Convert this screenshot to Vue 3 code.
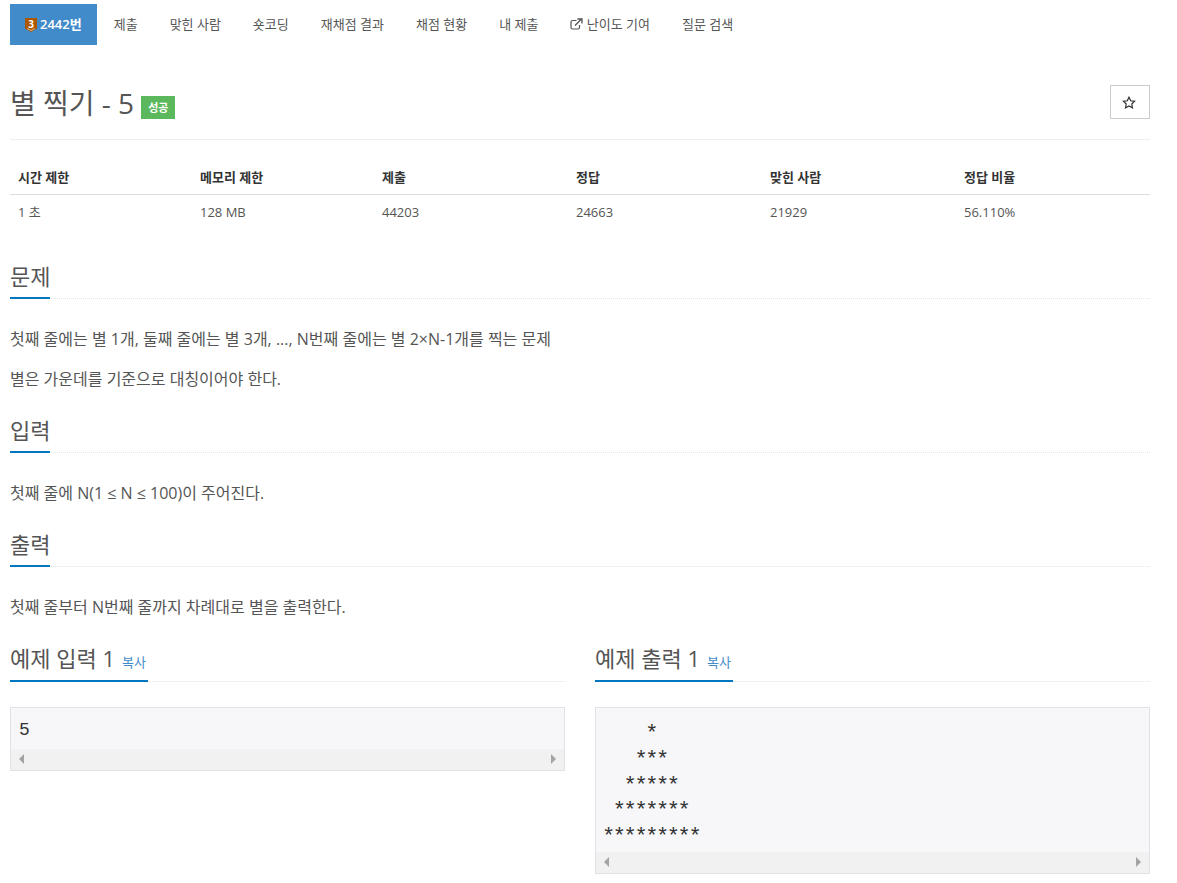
<script setup>
const navItems = ['제출', '맞힌 사람', '숏코딩', '재채점 결과', '채점 현황', '내 제출']
const heads = ['시간 제한', '메모리 제한', '제출', '정답', '맞힌 사람', '정답 비율']
const vals = ['1 초', '128 MB', '44203', '24663', '21929', '56.110%']
const stars = '    *\n   ***\n  *****\n *******\n*********'
</script>

<template>
  <div class="page">
    <ul class="nav">
      <li class="item active">
        <a>
          <span class="tier">
            <svg width="12" height="14" viewBox="0 0 12 14"><path d="M0 0H12V10.5L6 14L0 10.5Z" fill="#ad5600"/><path d="M2 10.5L6 12.5L10 10.5" fill="none" stroke="#e8c9a8" stroke-width="0.8"/></svg>
            <span class="tier-num">3</span>
          </span>2442번
        </a>
      </li>
      <li v-for="n in navItems" :key="n" class="item"><a>{{ n }}</a></li>
      <li class="item">
        <a>
          <svg class="ext" width="13" height="12" viewBox="0 0 13 12"><path d="M9.5 7V9.5A1.5 1.5 0 0 1 8 11H2.5A1.5 1.5 0 0 1 1 9.5V4A1.5 1.5 0 0 1 2.5 2.5H6.5" fill="none" stroke="#555" stroke-width="1.2"/><path d="M5 7.5L11 1.5M7.5 1H12V5.5" fill="none" stroke="#555" stroke-width="1.3"/></svg>
          난이도 기여
        </a>
      </li>
      <li class="item"><a>질문 검색</a></li>
    </ul>

    <div class="title-row">
      <h1 class="title">별 찍기 - 5<span class="label">성공</span></h1>
      <button class="star-btn">
        <svg width="14" height="13" viewBox="0 0 14 13"><path d="M7 1.2L8.7 4.8L12.6 5.3L9.8 8L10.5 11.9L7 10L3.5 11.9L4.2 8L1.4 5.3L5.3 4.8Z" fill="none" stroke="#333" stroke-width="1.2" stroke-linejoin="miter"/></svg>
      </button>
    </div>

    <table class="info">
      <thead><tr><th v-for="h in heads" :key="h">{{ h }}</th></tr></thead>
      <tbody><tr><td v-for="v in vals" :key="v">{{ v }}</td></tr></tbody>
    </table>

    <section class="sec first">
      <div class="headline"><h2>문제</h2></div>
      <p>첫째 줄에는 별 1개, 둘째 줄에는 별 3개, ..., N번째 줄에는 별 2×N-1개를 찍는 문제</p>
      <p>별은 가운데를 기준으로 대칭이어야 한다.</p>
    </section>
    <section class="sec">
      <div class="headline"><h2>입력</h2></div>
      <p>첫째 줄에 N(1 ≤ N ≤ 100)이 주어진다.</p>
    </section>
    <section class="sec">
      <div class="headline"><h2>출력</h2></div>
      <p>첫째 줄부터 N번째 줄까지 차례대로 별을 출력한다.</p>
    </section>

    <div class="samples">
      <div class="sample">
        <div class="headline"><h2>예제 입력 1<a class="copy">복사</a></h2></div>
        <div class="pre">
          <pre>5</pre>
          <div class="bar"><i class="al"></i><i class="ar"></i></div>
        </div>
      </div>
      <div class="sample">
        <div class="headline"><h2>예제 출력 1<a class="copy">복사</a></h2></div>
        <div class="pre">
          <pre class="stars">{{ stars }}</pre>
          <div class="bar"><i class="al"></i><i class="ar"></i></div>
        </div>
      </div>
    </div>
  </div>
</template>

<style>
html, body { background: #fff; }
</style>

<style scoped>
.page {
  width: 1140px;
  padding: 4px 0 9px;
  margin-left: 10px;
  font-family: "Open Sans", "Noto Sans CJK KR", sans-serif;
  font-size: 16px;
  color: #555;
}
.nav {
  display: flex;
  list-style: none;
  margin: 0;
  padding: 0;
  gap: 2px;
}
.item a {
  display: block;
  padding: 0 15px;
  line-height: 41px;
  font-size: 13px;
  color: #555;
}
.active a {
  background: #428bca;
  color: #fff;
  font-weight: 600;
}
.tier { position: relative; display: inline-block; width: 12px; height: 14px; vertical-align: -3px; margin-right: 3px; }
.tier svg { display: block; }
.tier-num {
  position: absolute;
  left: 0; right: 0; top: 0;
  text-align: center;
  font-size: 10px;
  line-height: 12px;
  font-weight: 700;
  color: #fff;
}
.ext { vertical-align: -1px; }
.title-row {
  display: flex;
  justify-content: space-between;
  align-items: flex-start;
  margin-top: 40px;
  height: 54px;
  border-bottom: 1px solid #eee;
}
.title {
  margin: 0;
  font-size: 28px;
  font-weight: 400;
  line-height: 36px;
  color: #555;
}
.label {
  display: inline-block;
  background: #5cb85c;
  color: #fff;
  font-size: 11px;
  font-weight: 700;
  line-height: 23px;
  padding: 0 7px;
  margin-left: 7px;
  vertical-align: 2px;
}
.star-btn {
  width: 40px;
  height: 34px;
  background: #fff;
  border: 1px solid #ccc;
  padding: 0 2px 0 0;
  display: flex;
  align-items: center;
  justify-content: center;
}
.info {
  width: 100%;
  table-layout: fixed;
  border-collapse: collapse;
  margin-top: 19px;
  font-size: 13px;
  color: #333;
}
.info th, .info td { box-sizing: border-box; }
.info th:nth-child(-n+2), .info td:nth-child(-n+2) { width: 182px; }
.info th:nth-child(n+3), .info td:nth-child(n+3) { width: 194px; }
.info th {
  text-align: left;
  font-weight: 700;
  padding: 0 8px;
  height: 35px;
  border-bottom: 1px solid #ddd;
}
.info td { padding: 0 8px; height: 35px; color: #555; }
.sec { margin-top: 32px; }
.sec + .sec { margin-top: 26px; }
.sec p { margin: 0; line-height: 20px; padding-top: 20px; }
.sec .headline { margin-bottom: 10px; }
.headline { border-bottom: 1px dotted #e5e5e5; }
.headline h2 {
  display: inline-block;
  margin: 0 0 -1px;
  font-size: 22px;
  font-weight: 400;
  line-height: 30px;
  padding-bottom: 6px;
  border-bottom: 2px solid #0076c0;
  color: #555;
  vertical-align: top;
}
.sample .headline h2 { padding-bottom: 7px; padding-right: 2px; }
.samples { display: grid; grid-template-columns: 1fr 1fr; gap: 30px; margin-top: 26px; align-items: start; }
.copy { font-size: 13px; line-height: 1; color: #428bca; margin-left: 7px; }
.pre { margin-top: 25px; border: 1px solid #e1e1e8; background: #f7f7f9; }
.pre pre {
  margin: 0;
  padding: 10px 8px 5px;
  font-family: "Liberation Mono", monospace;
  font-size: 18px;
  line-height: 25.75px;
  color: #333;
}
.pre .stars {
  padding: 14px 7px 1px 6px;
  font-size: 22px;
  letter-spacing: -2.4px;
}
.bar { height: 21px; background: #f1f1f1; display: flex; justify-content: space-between; align-items: center; padding: 0 8px; }
.bar i { width: 0; height: 0; border-top: 5px solid transparent; border-bottom: 5px solid transparent; }
.al { border-right: 5px solid #a3a3a3; }
.ar { border-left: 5px solid #a3a3a3; }
</style>
